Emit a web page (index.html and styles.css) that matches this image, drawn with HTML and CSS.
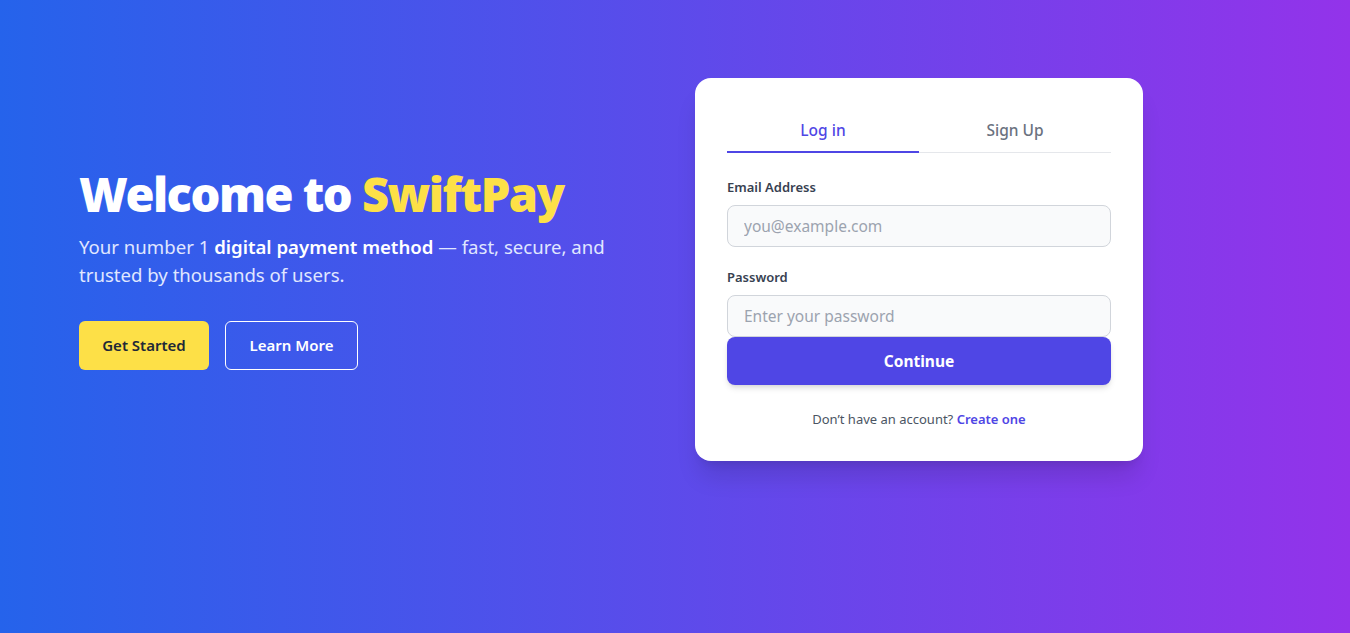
FILE: index.html
```html
<!DOCTYPE html>
<html lang="en">
<head>
<meta charset="utf-8">
<title>SwiftPay</title>
<link rel="stylesheet" href="styles.css">
</head>
<body>
<main class="page">
  <section class="hero">
    <h1 class="hero-title">Welcome to <span class="brand">SwiftPay</span></h1>
    <p class="hero-text">Your number 1 <strong>digital payment method</strong> — fast, secure, and trusted by thousands of users.</p>
    <div class="hero-actions">
      <a class="btn btn-primary" href="#">Get Started</a>
      <a class="btn btn-outline" href="#">Learn More</a>
    </div>
  </section>
  <section class="card">
    <div class="tabs">
      <button class="tab tab-active">Log in</button>
      <button class="tab">Sign Up</button>
    </div>
    <form class="form">
      <label class="label" for="email">Email Address</label>
      <input class="input" id="email" type="email" placeholder="you@example.com">
      <label class="label label-pw" for="pw">Password</label>
      <input class="input" id="pw" type="password" placeholder="Enter your password">
      <button class="submit" type="button">Continue</button>
    </form>
    <p class="footer-note">Don’t have an account? <a href="#" class="link">Create one</a></p>
  </section>
</main>
</body>
</html>
```

FILE: styles.css
```css
* { box-sizing: border-box; }
html, body { margin: 0; padding: 0; }
body {
  font-family: "Noto Sans", "Open Sans", sans-serif;
  background: linear-gradient(to right, #2563eb, #9333ea);
  min-height: 633px;
  color: #fff;
}
.page {
  display: flex;
  align-items: center;
  padding: 78px 0 0 79px;
  gap: 40px;
}
.hero {
  flex: 0 0 576px;
  margin-top: 0;
}
.hero-title {
  margin: 0;
  font-size: 47px;
  font-weight: 900;
  line-height: 1.1;
  letter-spacing: -1.5px;
}
.brand { color: #fde047; }
.hero-text {
  margin: 12px 0 0;
  font-size: 18.6px;
  line-height: 28px;
  color: #e0e7ff;
  max-width: 540px;
}
.hero-text strong { color: #fff; font-weight: 600; }
.hero-actions {
  display: flex;
  gap: 16px;
  margin-top: 32px;
}
.btn {
  display: inline-flex;
  align-items: center;
  justify-content: center;
  height: 49px;
  padding: 0;
  white-space: nowrap;
  border-radius: 6px;
  font-size: 15px;
  font-weight: 600;
  text-decoration: none;
}
.btn-primary {
  background: #fde047;
  color: #1f2937;
  width: 130px;
}
.btn-outline {
  border: 1px solid #fff;
  color: #fff;
  width: 133px;
}
.card {
  flex: 0 0 448px;
  background: #fff;
  border-radius: 16px;
  padding: 32px;
  box-shadow: 0 20px 25px -5px rgba(0,0,0,0.12), 0 8px 10px -6px rgba(0,0,0,0.1);
  color: #374151;
}
.tabs {
  display: flex;
  border-bottom: 1px solid #e5e7eb;
}
.tab {
  flex: 1;
  background: none;
  border: none;
  border-bottom: 2px solid transparent;
  margin-bottom: -1px;
  padding: 9px 0 9px;
  font-family: inherit;
  font-size: 15.5px;
  font-weight: 500;
  line-height: 23px;
  color: #6b7280;
}
.tab-active {
  color: #4f46e5;
  border-bottom-color: #4f46e5;
}
.form {
  display: flex;
  flex-direction: column;
  margin-top: 24px;
}
.label {
  font-size: 13px;
  font-weight: 600;
  line-height: 20px;
  color: #374151;
  margin-bottom: 8px;
}
.label-pw { margin-top: 20px; }
.input {
  height: 42px;
  border: 1px solid #d1d5db;
  border-radius: 8px;
  background: #f9fafb;
  padding: 0 16px;
  font-family: inherit;
  font-size: 15.5px;
  color: #111827;
}
.input::placeholder { color: #9ca3af; }
.submit {
  height: 48px;
  border: none;
  border-radius: 8px;
  background: #4f46e5;
  color: #fff;
  font-family: inherit;
  font-size: 15.5px;
  font-weight: 700;
  box-shadow: 0 4px 6px -1px rgba(0,0,0,0.12), 0 2px 4px -2px rgba(0,0,0,0.1);
}
.footer-note {
  margin: 24px 0 0;
  text-align: center;
  font-size: 13px;
  line-height: 20px;
  color: #4b5563;
}
.link {
  color: #4f46e5;
  font-weight: 600;
  text-decoration: none;
}
```
